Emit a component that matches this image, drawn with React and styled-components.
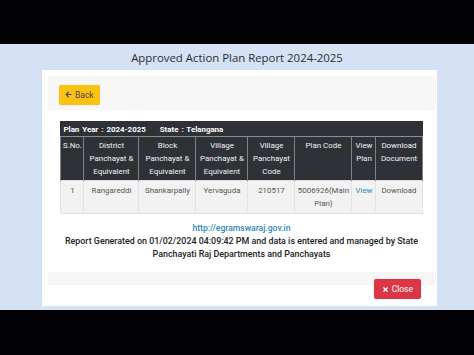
import React from 'react'
import styled, {createGlobalStyle} from 'styled-components'
import {FaArrowLeft, FaTimes} from 'react-icons/fa'

const Global = createGlobalStyle`
  html, body { margin: 0; padding: 0; background: #000; }
  body { font-family: Roboto, "Liberation Sans", sans-serif; }
`

const Screen = styled.div`
  width: 474px;
  height: 355px;
  display: flex;
  flex-direction: column;
  background: #000;
  overflow: hidden;
`

const Letterbox = styled.div`
  height: ${props => props.h}px;
  flex: none;
  background: #020204;
`

const Stage = styled.div`
  flex: 1;
  background: #d5e1f4;
  display: flex;
  flex-direction: column;
  align-items: center;
`

const Title = styled.h1`
  margin: 0;
  height: 26px;
  line-height: 28px;
  font-family: "Open Sans", sans-serif;
  font-weight: 500;
  font-size: 11.4px;
  color: #2b2d33;
`

const Card = styled.div`
  width: 395px;
  height: 236px;
  margin-left: 5px;
  box-sizing: border-box;
  background: #fff;
  padding: 6px 5px 3px 6px;
  display: flex;
`

const Panel = styled.div`
  flex: 1;
  display: flex;
  flex-direction: column;
  background: #fff;
`

const Heading = styled.div`
  height: 34px;
  box-sizing: border-box;
  background: #f7f7f7;
  padding: 7px 11px;
`

const Button = styled.button`
  display: inline-flex;
  align-items: center;
  gap: 3px;
  height: 20px;
  padding: 0 ${props => props.px}px;
  border: none;
  border-radius: 2px;
  font-family: Roboto, sans-serif;
  font-size: 8.5px;
  background: ${props => props.bg};
  color: ${props => props.fg};
  box-shadow: 0 0 1px rgba(0,0,0,0.2);
  svg { font-size: 7px; }
`

const Body = styled.div`
  flex: 1;
  padding: 11px 12px 0 11px;
  display: flex;
  flex-direction: column;
  align-items: center;
`

const Table = styled.table`
  width: 361px;
  border-collapse: collapse;
  table-layout: fixed;
  font-size: 7.9px;
  line-height: 13px;
`

const InfoCell = styled.td`
  background: #2e3237;
  color: #fff;
  font-weight: 700;
  height: 14px;
  padding: 0 2px;
  border: 1px solid #2e3237;
  border-bottom-color: #8a8d91;
  word-spacing: 1px;
  span { margin-left: 14px; }
`

const Th = styled.th`
  background: #2e3237;
  color: #f2f2f2;
  font-weight: 400;
  vertical-align: top;
  padding: 2px 0 2px;
  height: 39px;
  border: 1px solid #7e8185;
  border-top: none;
  border-bottom: none;
`

const Td = styled.td`
  background: #f2f2f2;
  color: ${props => props.link ? '#2f8bc0' : '#555'};
  text-align: center;
  vertical-align: top;
  padding: 3px 0;
  height: 23px;
  border: 1px solid #e2e2e2;
`

const Site = styled.div`
  margin-top: 8px;
  font-size: 8.6px;
  font-weight: 500;
  color: #2b8ac3;
  line-height: 12px;
`

const Note = styled.p`
  margin: 1px 0 0;
  text-align: center;
  font-size: 8.9px;
  font-weight: 500;
  color: #222;
  line-height: 13px;
  width: 365px;
`

const Footer = styled.div`
  height: 31px;
  background: linear-gradient(#f6f6f6 0 13px, #fff 13px);
  display: flex;
  justify-content: flex-end;
  align-items: flex-start;
  padding: 7px 15px 0 0;
  box-sizing: border-box;
`

const cols = [23, 55, 57, 52, 47, 57, 24, 46]

const App = () => (
  <Screen>
    <Global/>
    <Letterbox h={44}/>
    <Stage>
      <Title>Approved Action Plan Report 2024-2025</Title>
      <Card>
        <Panel>
          <Heading>
            <Button bg="#fdc210" fg="#444" px={6}><FaArrowLeft/>Back</Button>
          </Heading>
          <Body>
            <Table>
              <colgroup>
                {cols.map((w, i) => <col key={i} style={{width: w}}/>)}
              </colgroup>
              <tbody>
                <tr>
                  <InfoCell colSpan={8}>Plan Year : 2024-2025<span>State : Telangana</span></InfoCell>
                </tr>
                <tr>
                  <Th>S.No.</Th>
                  <Th>District Panchayat &amp; Equivalent</Th>
                  <Th>Block Panchayat &amp; Equivalent</Th>
                  <Th>Village Panchayat &amp; Equivalent</Th>
                  <Th>Village Panchayat Code</Th>
                  <Th>Plan Code</Th>
                  <Th>View Plan</Th>
                  <Th>Download Document</Th>
                </tr>
                <tr>
                  <Td>1</Td>
                  <Td>Rangareddi</Td>
                  <Td>Shankarpally</Td>
                  <Td>Yervaguda</Td>
                  <Td>210517</Td>
                  <Td>5006926(Main Plan)</Td>
                  <Td link>View</Td>
                  <Td>Download</Td>
                </tr>
              </tbody>
            </Table>
            <Site>http://egramswaraj.gov.in</Site>
            <Note>Report Generated on 01/02/2024 04:09:42 PM and data is entered and managed by State Panchayati Raj Departments and Panchayats</Note>
          </Body>
          <Footer>
            <Button bg="#dc3545" fg="#fff" px={8}><FaTimes/>Close</Button>
          </Footer>
        </Panel>
      </Card>
    </Stage>
    <Letterbox h={45}/>
  </Screen>
)

export default App
